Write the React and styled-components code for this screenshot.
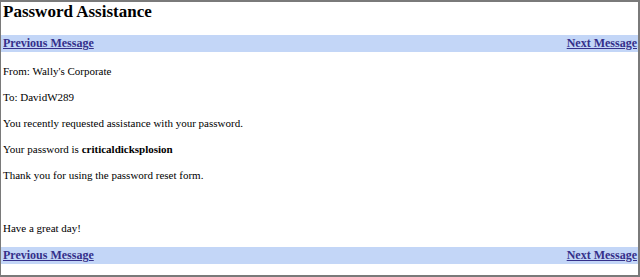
import React from "react";
import styled, { createGlobalStyle } from "styled-components";

const Global = createGlobalStyle`
  html, body {
    margin: 0;
    padding: 0;
    background: #fff;
  }
  body {
    font-family: "Liberation Serif", "Times New Roman", serif;
    color: #000;
  }
`;

const Frame = styled.div`
  box-sizing: border-box;
  width: 640px;
  height: 277px;
  border: 1px solid #7a7a7a;
  border-top-width: 2px;
  border-right-width: 2px;
  border-bottom-width: 2px;
  display: flex;
  flex-direction: column;
  overflow: hidden;
`;

const Title = styled.h1`
  margin: 0;
  padding: 0 2px;
  height: 33px;
  font-size: 17px;
  line-height: 20px;
  font-weight: bold;
`;

const NavBar = styled.div`
  height: 17px;
  background: #c3d6f7;
  display: flex;
  align-items: center;
  justify-content: space-between;
  padding: 0 1px 0 2px;
`;

const NavLink = styled.a`
  font-size: 12px;
  font-weight: bold;
  color: #35308a;
  text-decoration: underline;
  cursor: pointer;
`;

const Body = styled.div`
  flex: 1;
  padding: 0 2px;
  font-size: 11px;
  line-height: 14px;
`;

const Line = styled.p`
  margin: ${(p) => (p.$gap ? "39px" : "12px")} 0 12px;
`;

const Nav = () => (
  <NavBar>
    <NavLink href="#">Previous Message</NavLink>
    <NavLink href="#">Next Message</NavLink>
  </NavBar>
);

export default function App() {
  return (
    <>
      <Global />
      <Frame>
        <Title>Password Assistance</Title>
        <Nav />
        <Body>
          <Line>From: Wally's Corporate</Line>
          <Line>To: DavidW289</Line>
          <Line>You recently requested assistance with your password.</Line>
          <Line>
            Your password is <b>criticaldicksplosion</b>
          </Line>
          <Line>Thank you for using the password reset form.</Line>
          <Line $gap>Have a great day!</Line>
        </Body>
        <Nav />
        <div style={{ height: 11 }} />
      </Frame>
    </>
  );
}
